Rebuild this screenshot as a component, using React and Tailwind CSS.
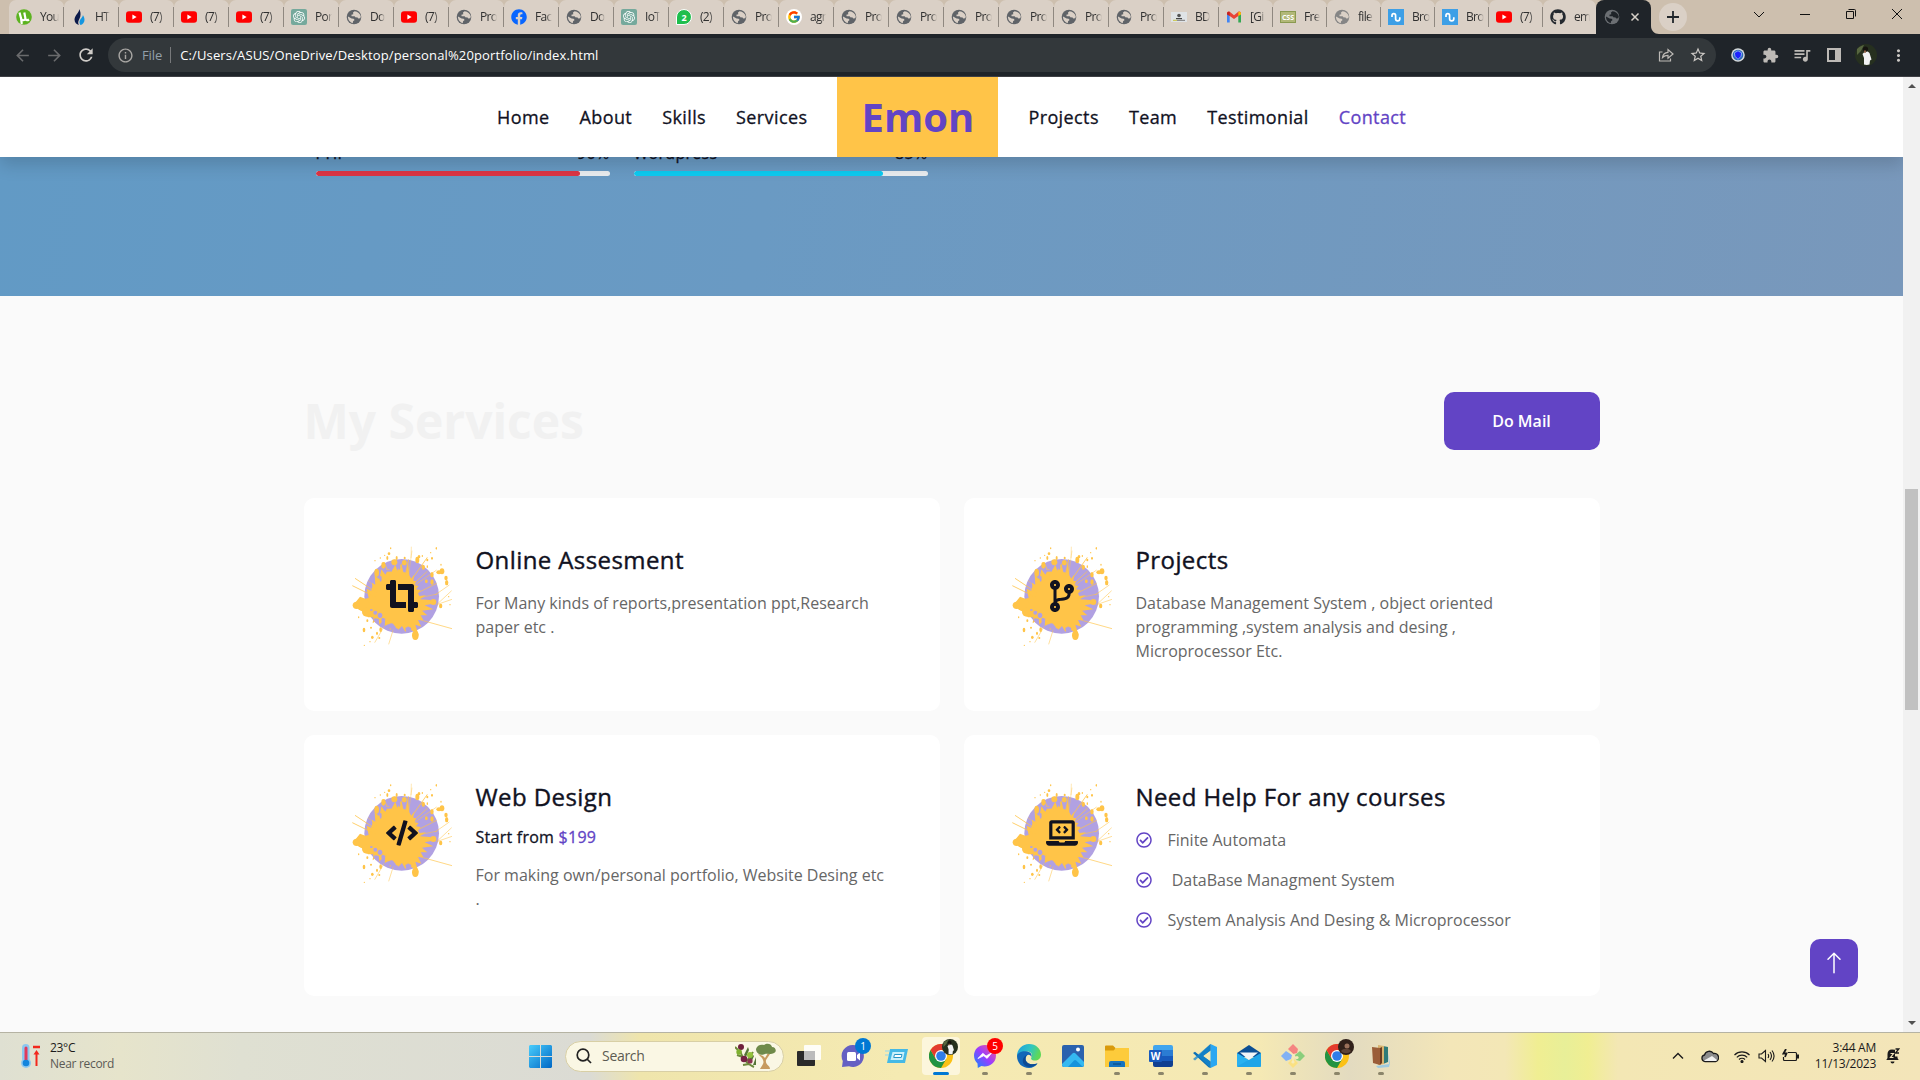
import React from "react";
import { FaCropAlt, FaCodeBranch, FaCode, FaLaptopCode, FaRegCheckCircle, FaGithub, FaFacebook } from "react-icons/fa";
import { BsArrowUp } from "react-icons/bs";
import { SiOpenai } from "react-icons/si";
import { FcGoogle } from "react-icons/fc";
import { MdInfoOutline, MdStarBorder, MdQueueMusic, MdMoreVert, MdRefresh, MdArrowBack, MdArrowForward, MdExtension } from "react-icons/md";

/* ---------- favicons ---------- */

const Globe = ({ land = "#dad0c6", sea = "#5f6368" }) => (
  <svg viewBox="0 0 16 16" className="size-4">
    <circle cx="8" cy="8" r="7.300" fill={sea} />
    <path d="M8.600 2.200 7 3.600l.3 1.600-1.900.6.2 1.400h3l1.200 1.300 1.400-.3 1.100 1.300 2-.3.5-1.600C14.200 4.500 11.800 2.500 8.600 2.200z" fill={land} />
    <path d="M2 7.600 5.600 9.400l2 .3 1 1.300-1.500 1.300-.4 2C4 13.400 1.800 11 2 7.600z" fill={land} />
  </svg>
);

const YouTube = () => (
  <svg viewBox="0 0 16 16" className="size-4">
    <rect y="2.300" width="16" height="11.400" rx="3" fill="#f00" />
    <path d="M6.400 5.600v4.800L10.600 8z" fill="#fff" />
  </svg>
);

const OpenAi = () => (
  <span className="grid size-4 place-items-center rounded-[2px] bg-[#75a99c] text-white">
    <SiOpenai size={12} />
  </span>
);

const UTorrent = () => (
  <svg viewBox="0 0 16 16" className="size-4">
    <circle cx="8" cy="8" r="7.800" fill="#5cb320" />
    <path d="M3.500 3.500l1.600 6c.6 2.300 3.600 2.200 4.400.3L8.300 3.500M9.500 10c.5 1.600 2.300 1.400 3.500.5M5 9l.8 6" stroke="#fff" strokeWidth="2.200" fill="none" />
  </svg>
);

const Flame = () => (
  <svg viewBox="0 0 16 16" className="size-4">
    <path d="M8 0c1 3-4.500 6-4.500 10.500C3.500 13.500 5.500 15.500 8 16c-2-3 .5-5.500 1.300-8.500C9.900 4.500 9.500 2 8 0z" fill="#0b1a4a" />
    <path d="M11.800 6c.5 2-3.300 4-3.300 7 0 1.500.5 2.300 1 3 2-.4 4-2.300 4-5 0-2-.7-3.700-1.700-5z" fill="#1496e0" />
  </svg>
);

const Chat2 = () => (
  <span className="grid size-4 place-items-center rounded-full rounded-bl-none border border-white bg-[#1fbe4d] text-[9px] leading-none font-bold text-white">2</span>
);

const Bd = () => (
  <svg viewBox="0 0 16 16" className="size-4">
    <rect y="3" width="16" height="10" fill="#dfe3e6" />
    <circle cx="8" cy="6.500" r="1.800" fill="#555" />
    <path d="M5 9h6v1.200H5z" fill="#444" />
    <path d="M2 10.800h4v1H2z" fill="#c8c33b" />
    <path d="M6 10.800h8v1H6z" fill="#777" />
  </svg>
);

const Gmail = () => (
  <svg viewBox="0 0 16 16" className="size-4">
    <path d="M1 13.500V4l2.700 2v7.500z" fill="#4285f4" />
    <path d="M15 13.500V4l-2.700 2v7.500z" fill="#34a853" />
    <path d="M1 4.500C1 2.600 2.800 2.200 4 3l4 3.200L12 3c1.200-.8 3-.4 3 1.500L12.300 7 8 10 3.700 7z" fill="#ea4335" />
    <path d="M12.300 3C13.500 2.200 15 3 15 4.500V5.500L12.300 7z" fill="#fbbc04" />
    <path d="M1 4.500C1 3 2.500 2.200 3.700 3v4L1 5.500z" fill="#c5221f" />
  </svg>
);

const Css = () => (
  <span className="grid h-[12px] w-4 place-items-center border border-[#8a9a50] bg-[#b2b878] text-[7px] leading-none font-bold text-white">CSS</span>
);

const Wave = () => (
  <svg viewBox="0 0 16 16" className="size-4">
    <rect width="16" height="16" fill="#3d9fe6" />
    <path d="M4 8V6.500a1.800 1.800 0 0 1 3.600 0v3.200a2.100 2.100 0 0 0 4.200 0V8.300" stroke="#fff" strokeWidth="1.700" fill="none" />
  </svg>
);

const pro = { icon: <Globe />, t: "Pro" };
const tube = { icon: <YouTube />, t: "(7)" };
const TABS = [
  { icon: <UTorrent />, t: "You" },
  { icon: <Flame />, t: "HT" },
  tube, tube, tube,
  { icon: <OpenAi />, t: "Por" },
  { icon: <Globe />, t: "Do" },
  tube, pro,
  { icon: <FaFacebook size={16} color="#0866ff" />, t: "Fac" },
  { icon: <Globe />, t: "Do" },
  { icon: <OpenAi />, t: "IoT" },
  { icon: <Chat2 />, t: "(2)" },
  pro,
  { icon: <span className="rounded-full bg-white p-px"><FcGoogle size={14} /></span>, t: "agr" },
  pro, pro, pro, pro, pro, pro,
  { icon: <Bd />, t: "BD" },
  { icon: <Gmail />, t: "[Gi", w: "w-[54px]" },
  { icon: <Css />, t: "Fre", w: "w-[54px]" },
  { icon: <Globe sea="#858585" />, t: "file", w: "w-[54px]" },
  { icon: <Wave />, t: "Bro", w: "w-[54px]" },
  { icon: <Wave />, t: "Bro", w: "w-[54px]" },
  { ...tube, w: "w-[54px]" },
  { icon: <FaGithub size={16} color="#24292f" />, t: "em", w: "w-[53px]", last: true },
];

function TabStrip() {
  return (
    <div className="flex h-[34px] bg-[#cdbfae] pl-[9px]">
      {TABS.map((tab, i) => (
        <div
          key={i}
          className={`flex shrink-0 items-center rounded-t-[7px] bg-[#dad0c6] pl-[7px] ${tab.w || "w-[55px]"}`}
        >
          <span className="grid size-4 shrink-0 place-items-center">{tab.icon}</span>
          <span className="ml-[8px] min-w-[15px] mask-r-from-65% text-[12px] tracking-[-0.7px] whitespace-nowrap text-[#303030]">
            {tab.t}
          </span>
          {!tab.last && <span className="ml-auto h-5 w-px bg-[#8f8880]" />}
        </div>
      ))}
      <div className="flex w-[55px] shrink-0 items-center rounded-t-[8px] bg-[#1f2429] pl-2">
        <Globe land="#1f2429" sea="#6b6f73" />
        <svg viewBox="0 0 10 10" className="ml-[10px] size-[10px]">
          <path d="M1.500 1.500l7 7M8.500 1.500l-7 7" stroke="#d6d0c8" strokeWidth="1.500" />
        </svg>
      </div>
      <svg viewBox="0 0 8 8" className="size-2 self-end">
        <path d="M0 0v8h8C3.500 8 0 4.500 0 0z" fill="#1f2429" />
      </svg>
      <div className="mt-[3px] grid size-7 place-items-center rounded-full bg-[#dad0c6]">
        <svg viewBox="0 0 12 12" className="size-3">
          <path d="M6 0v12M0 6h12" stroke="#20252a" strokeWidth="1.800" />
        </svg>
      </div>
      <div className="ml-auto flex h-[28px] text-[#111]">
        {[
          "M1 4l5 5 5-5",
          "M1 6.500h10",
          "M1.500 3.500h7v7h-7zM3.500 1.500h6a1 1 0 0 1 1 1v6",
          "M1 1l10 10M11 1L1 11",
        ].map((d) => (
          <div key={d} className="grid w-[46px] place-items-center">
            <svg viewBox="0 0 12 12" className="size-3" fill="none" stroke="currentColor">
              <path d={d} />
            </svg>
          </div>
        ))}
      </div>
    </div>
  );
}

const Cell = ({ children }) => <div className="grid w-8 place-items-center">{children}</div>;

const Portrait = ({ className }) => (
  <svg viewBox="0 0 22 22" className={className}>
    <circle cx="11" cy="11" r="11" fill="#26301f" />
    <path d="M2 5c3-3 6-4 7-4l-3 6-4 4z" fill="#56653f" />
    <path d="M9.500 8c2-1 4-.8 5 1l2 6.500-1.500 1-.5 4c-2 .7-4 .5-5.500 0L9 14 7.500 10z" fill="#f1f2f4" />
    <circle cx="10.500" cy="5" r="2.600" fill="#15130f" />
    <path d="M9 6.500h2v2.200H9z" fill="#8d6247" />
  </svg>
);

function Toolbar() {
  return (
    <div className="flex h-[43px] items-center border-b border-[#3f4045] bg-[#1f2429] pr-[6px] pl-[6px]">
      <Cell><MdArrowBack size={19} color="#6a6b6d" /></Cell>
      <Cell><MdArrowForward size={19} color="#6a6b6d" /></Cell>
      <Cell><MdRefresh size={20} color="#cfccc8" /></Cell>
      <div className="mx-[6px] flex h-[34px] flex-1 items-center rounded-full bg-[#33383b] pl-[9px]">
        <MdInfoOutline size={17} color="#a9a7a4" />
        <span className="ml-2 pt-px text-[13px] tracking-[-0.1px] text-[#93a0ab]">File</span>
        <span className="mr-[9px] ml-[8px] h-4 w-px bg-[#77797b]" />
        <span className="pt-[2px] text-[13px] tracking-[0.14px] text-white">C:/Users/ASUS/OneDrive/Desktop/personal%20portfolio/index.html</span>
        <svg viewBox="0 0 16 16" className="mr-[15px] ml-auto size-4" fill="none" stroke="#bdbab6" strokeWidth="1.200">
          <path d="M4.500 5H1.500v9h11v-2.500" />
          <path d="M4.500 10.500c.5-3.500 2.500-5 5.500-5.200V2.500L15 7l-5 4.200V8.400c-2.500 0-4 .6-5.500 2.100z" />
        </svg>
        <MdStarBorder size={18} color="#cbc8c4" className="mr-[9px]" />
      </div>
      <Cell>
        <svg viewBox="0 0 14 14" className="size-[14px]">
          <circle cx="7" cy="7" r="6.800" fill="#d5d9da" />
          <circle cx="7" cy="7" r="5.300" fill="#2b68b8" />
          <path d="M7 2.800l3.600 2-.5 3.400L7 11.400 3.900 8.200l-.5-3.400z" fill="#1c21ff" stroke="#9ec3ee" strokeWidth=".8" />
        </svg>
      </Cell>
      <Cell><MdExtension size={17} color="#bdbab6" /></Cell>
      <Cell><MdQueueMusic size={20} color="#bdbab6" /></Cell>
      <Cell>
        <svg viewBox="0 0 14 14" className="size-[14px]">
          <path d="M0 0h14v14H0zM2 2v10h6V2z" fillRule="evenodd" fill="#bdbab6" />
        </svg>
      </Cell>
      <Cell><Portrait className="size-[22px]" /></Cell>
      <Cell><MdMoreVert size={19} color="#cbc8c4" /></Cell>
    </div>
  );
}

/* ---------- page ---------- */

const NavLink = ({ children, active }) => (
  <a className={`px-[15px] text-[18px] tracking-[0.022em] [-webkit-text-stroke:0.3px_currentColor] ${active ? "text-[#6244c5]" : "text-[#11121f]"}`}>{children}</a>
);

function NavBar() {
  return (
    <nav className="relative z-10 flex h-20 items-center bg-white pl-[482px] whitespace-nowrap shadow-[0_8px_16px_rgba(0,0,0,0.15)]">
      <NavLink>Home</NavLink>
      <NavLink>About</NavLink>
      <NavLink>Skills</NavLink>
      <NavLink>Services</NavLink>
      <div className="mx-[15px] grid h-20 w-[161px] shrink-0 place-items-center bg-[#ffc448] text-[40px] font-bold text-[#6244c5]">Emon</div>
      <NavLink>Projects</NavLink>
      <NavLink>Team</NavLink>
      <NavLink>Testimonial</NavLink>
      <NavLink active>Contact</NavLink>
    </nav>
  );
}

const Skill = ({ name, value, color }) => (
  <div className="w-[294px]">
    <div className="flex h-6 justify-between text-[16px] leading-6 tracking-[0.018em] text-[#11121f] [-webkit-text-stroke:0.3px_currentColor]">
      <span>{name}</span>
      <span>{value}%</span>
    </div>
    <div className="mt-[6px] h-[5px] overflow-hidden rounded-full bg-[#e9ecef]">
      <div className={`h-full rounded-full ${color}`} style={{ width: `${value}%` }} />
    </div>
  </div>
);

const RAYS = [
  [45, 145, 110, 188, 3], [37, 167, 108, 202, 3], [235, 268, 336, 296, 2.5], [214, 50, 213, 84, 1.5],
  [292, 222, 335, 182, 2], [290, 224, 336, 208, 2], [160, 298, 146, 343, 2], [214, 150, 262, 82, 3],
  [285, 195, 328, 165, 2], [132, 290, 104, 338, 2], [225, 165, 290, 120, 2], [230, 190, 290, 160, 2.5],
  [205, 140, 216, 62, 1.500], [230, 205, 292, 192, 2], [195, 140, 206, 88, 3], [222, 160, 262, 124, 2.5],
  [110, 175, 84, 152, 2], [150, 140, 132, 96, 3],
];
const DROPS = [
  [297, 127, 8, 6], [306, 124, 7, 9], [318, 144, 5, 7], [320, 158, 5, 8], [232, 90, 6, 10], [237, 80, 4, 5], [262, 90, 3, 4],
  [276, 85, 3, 4], [247, 78, 2, 3], [289, 55, 2, 4], [272, 68, 2, 2], [152, 55, 2, 3], [147, 71, 4, 4], [142, 84, 3, 6], [134, 76, 2, 2],
  [170, 84, 3, 6], [194, 84, 3, 4], [226, 316, 10, 14], [72, 300, 4, 7], [97, 322, 4, 5], [111, 310, 3, 5], [122, 299, 4, 7],
  [73, 346, 2, 2], [118, 324, 3, 3], [82, 272, 3, 4], [93, 293, 3, 3], [280, 216, 9, 9], [302, 228, 5, 7], [130, 106, 6, 10],
  [163, 97, 9, 9], [193, 98, 7, 8], [110, 128, 7, 12], [259, 154, 4, 6], [276, 134, 5, 8], [276, 156, 5, 8], [50, 226, 12, 11],
  [70, 226, 20, 18], [80, 246, 14, 14], [250, 112, 5, 8], [326, 200, 2, 2], [330, 224, 2, 2], [303, 104, 2, 3], [262, 110, 2, 4],
  [56, 262, 2, 3], [90, 335, 2, 2], [105, 92, 2, 2], [121, 84, 2, 2],
];
const HOLES = [
  [120, 256, 7, 8], [106, 248, 6, 6], [129, 270, 5, 7], [108, 270, 8, 5], [154, 288, 8, 8], [168, 300, 8, 5], [140, 294, 5, 4],
  [94, 240, 4, 3], [122, 146, 3, 9], [146, 122, 8, 3], [178, 112, 3, 8], [94, 168, 3, 8], [205, 296, 9, 5],
];

const Splash = () => (
  <svg viewBox="36 48 300 300" className="col-start-1 row-start-1 size-[100px]">
    <circle cx="185" cy="199" r="112" fill="#b1a1e2" />
    <g fill="#ffc448" stroke="#ffc448">
      <path
        strokeWidth="0"
        d="M40 225 60 200 76 206 86 204 80 176 94 182 96 158 106 164 104 136 118 148 124 118 136 134 146 116 154 126 166 104 172 122 184 100 190 126 198 128 204 96 208 136 214 146 222 134 220 152 228 154 224 166 236 168 228 178 242 180 234 190 238 198 258 196 240 208 270 210 286 220 254 226 280 238 246 242 262 256 242 256 250 270 234 270 244 290 226 284 236 316 214 300 204 288 196 306 186 288 172 302 164 286 150 300 146 282 134 288 136 264 118 284 116 266 98 280 100 262 84 262 62 240z"
      />
      {RAYS.map(([x1, y1, x2, y2, w], i) => (
        <line key={i} x1={x1} y1={y1} x2={x2} y2={y2} strokeWidth={w} opacity=".8" />
      ))}
      {DROPS.map(([x, y, rx, ry], i) => (
        <ellipse key={i} cx={x} cy={y} rx={rx} ry={ry} strokeWidth="0" />
      ))}
    </g>
    {HOLES.map(([x, y, rx, ry], i) => (
      <ellipse key={i} cx={x} cy={y} rx={rx} ry={ry} fill="#b1a1e2" />
    ))}
  </svg>
);

const Card = ({ icon, title, children }) => (
  <article className="flex rounded-[10px] bg-white p-12">
    <div className="grid size-[100px] shrink-0 place-items-center text-[32px] text-[#11121f]">
      <Splash />
      <span className="z-1 col-start-1 row-start-1">{icon}</span>
    </div>
    <div className="ml-6 flex-1">
      <h3 className="pb-[2px] text-[24px] leading-[27px] tracking-[0.017em] text-[#11121f] [-webkit-text-stroke:0.4px_currentColor]">{title}</h3>
      {children}
    </div>
  </article>
);

const Text = ({ className, children }) => <p className={`text-[16px] leading-6 text-[#666] ${className}`}>{children}</p>;

function Services() {
  return (
    <section className="h-[736px] bg-[#fafafa] pt-24 pl-[303.5px]">
      <div className="flex h-[58px] w-[1296px] items-center justify-between">
        <h2 className="text-[48px] leading-[58px] font-bold text-[#f1f1f1]">My Services</h2>
        <button className="h-[58px] w-[156px] rounded-[10px] bg-[#6244c5] text-[16px] font-semibold text-white">Do Mail</button>
      </div>
      <div className="mt-12 grid w-[1296px] grid-cols-2 grid-rows-[213px_261px] gap-6">
        <Card icon={<FaCropAlt />} title="Online Assesment">
          <Text className="mt-4">For Many kinds of reports,presentation ppt,Research<br />paper etc .</Text>
        </Card>
        <Card icon={<FaCodeBranch />} title="Projects">
          <Text className="mt-4">Database Management System , object oriented<br />programming ,system analysis and desing ,<br />Microprocessor Etc.</Text>
        </Card>
        <Card icon={<FaCode />} title="Web Design">
          <p className="mt-[13px] text-[16px] leading-6 tracking-[0.016em] text-[#11121f] [-webkit-text-stroke:0.3px_currentColor]">
            Start from <span className="text-[#6244c5]">$199</span>
          </p>
          <Text className="mt-[14px]">For making own/personal portfolio, Website Desing etc<br />.</Text>
        </Card>
        <Card icon={<FaLaptopCode />} title="Need Help For any courses">
          <ul className="mt-4 flex flex-col gap-4 text-[16px] leading-6 text-[#666]">
            {["Finite Automata", "\u00a0DataBase Managment System", "System Analysis And Desing & Microprocessor"].map((s) => (
              <li key={s} className="flex items-center gap-4 whitespace-nowrap">
                <FaRegCheckCircle size={16} color="#6244c5" />
                {s}
              </li>
            ))}
          </ul>
        </Card>
      </div>
    </section>
  );
}

function Page() {
  return (
    <div className="flex h-[955px]">
      <main className="relative w-[1903px] shrink-0 overflow-hidden">
        <NavBar />
        <section className="flow-root h-[139px] bg-[linear-gradient(100deg,#629ac5_0%,#6a9ac3_40%,#7998bb_100%)] pl-[315.5px]">
          <div className="-mt-4 flex gap-6">
            <Skill name="PHP" value={90} color="bg-[#dc3545]" />
            <Skill name="Wordpress" value={85} color="bg-[#0dcaf0]" />
          </div>
        </section>
        <Services />
        <button className="absolute right-[45px] bottom-[45px] grid size-12 place-items-center rounded-[10px] bg-[#6244c5] text-white">
          <BsArrowUp size={24} />
        </button>
      </main>
      <div className="flex flex-1 flex-col items-center bg-[#f1f1f1]">
        <span className="mt-[7px] border-x-4 border-b-4 border-x-transparent border-b-[#505050]" />
        <span className="mt-[401px] h-[221px] w-[13px] bg-[#c1c1c1]" />
        <span className="mt-auto mb-[7px] border-x-4 border-t-4 border-x-transparent border-t-[#505050]" />
      </div>
    </div>
  );
}

/* ---------- taskbar ---------- */

const Chrome = () => (
  <svg viewBox="0 0 24 24" className="size-6">
    <circle cx="12" cy="12" r="12" fill="#fbc116" />
    <path d="M1.600 6A12 12 0 0 0 12 24l5.200-9L12 12 6.800 15z" fill="#229342" />
    <path d="M1.600 6A12 12 0 0 1 22.400 6H12L6.800 15z" fill="#e33b2e" />
    <circle cx="12" cy="12" r="6" fill="#fff" />
    <circle cx="12" cy="12" r="4.800" fill="#2f7de9" />
  </svg>
);

const TaskView = () => (
  <svg viewBox="0 0 24 24" className="size-6">
    <rect y="7" width="18" height="15" rx="1" fill="#2a2a2a" />
    <rect x="7" y="1" width="17" height="15" rx="1" fill="#fff" opacity=".9" />
    <rect x="7" y="7" width="11" height="9" fill="#bcbcbc" />
  </svg>
);
const Teams = () => (
  <svg viewBox="0 0 24 24" className="size-6">
    <path d="M12 1a11 11 0 1 1-4 21.300L1 23l.8-6A11 11 0 0 1 12 1z" fill="#6560c3" />
    <rect x="6" y="8" width="9" height="9" rx="1.500" fill="#fff" />
    <path d="M16 11l3-2.500v8L16 14z" fill="#fff" />
  </svg>
);
const Run = () => (
  <svg viewBox="0 0 24 24" className="size-6">
    <path d="M5 5h18l-3 14H2z" fill="#45b9e6" />
    <path d="M7.500 8h12l-1.700 8H5.500z" fill="#c9f0fb" />
    <path d="M9.500 10.500h7.500l-.8 3H8.700z" fill="#fff" stroke="#2796c8" strokeWidth="1" />
    <path d="M0 7h5M0 11h4" stroke="#8ed7f0" />
  </svg>
);
const Messenger = () => (
  <svg viewBox="0 0 24 24" className="size-6">
    <linearGradient id="msg" x1="0" y1="1" x2="1" y2="0">
      <stop offset="0" stopColor="#0a8cff" /><stop offset=".5" stopColor="#9a3cff" /><stop offset="1" stopColor="#ff5f80" />
    </linearGradient>
    <path d="M12 1C5.500 1 1 5.600 1 11.600c0 3.200 1.300 5.900 3.500 7.800L4.800 24l3.600-2c6.400 1.800 14.600-2 14.600-10.400C23 5.600 18.500 1 12 1z" fill="url(#msg)" />
    <path d="M5 14.500l4.800-5.200 3.300 2.700 5.700-3.200-4.700 5.600-3.300-2.700z" fill="#fff" stroke="#fff" strokeWidth=".8" />
  </svg>
);
const Edge = () => (
  <svg viewBox="0 0 24 24" className="size-6">
    <linearGradient id="edg" x1="0" y1="0" x2="1" y2=".3">
      <stop offset="0" stopColor="#1b9de2" /><stop offset=".6" stopColor="#31c6c0" /><stop offset="1" stopColor="#5fd857" />
    </linearGradient>
    <path d="M0 12C0 5 5.500 0 12 0c7 0 12 5 12 10.500 0 4-3 6-6 6-3.500 0-4.500-1.500-3.600-3C16 10 14 7.500 10 7.500 5 7.500 2 11 0 12z" fill="url(#edg)" />
    <path d="M0 12C.5 9 4.500 7 9 7.300c4.500.2 6.300 3.400 5.400 5.700C13 9.500 9.500 10.500 8.700 13.500 7.500 18.500 13 22 20.500 19.500 18.500 22.300 15.500 24 12 24 5 24 0 19 0 12z" fill="#1167b8" />
    <path d="M8.700 13.500C7.500 18.500 13 22 20.500 19.500c-4 4-10 4.500-13 1.500C4.500 17.500 5.500 13 10 11z" fill="#0c4a93" />
  </svg>
);
const Photos = () => (
  <svg viewBox="0 0 24 24" className="size-6">
    <rect x="1" y="1" width="22" height="22" rx="2" fill="#2b62ae" />
    <path d="M1 20 11.500 9.500c1-1 2-1 3 0L23 18v3a2 2 0 0 1-2 2H3a2 2 0 0 1-2-2z" fill="#35b9f1" />
    <path d="M7 23l6-6.500c.7-.7 1.500-.7 2.200 0L22 23z" fill="#1593dc" />
    <circle cx="17" cy="5.500" r="2" fill="#fff" />
  </svg>
);
const Folder = () => (
  <svg viewBox="0 0 24 24" className="size-6">
    <path d="M0 2.500A1 1 0 0 1 1 1.500h7l2.500 2.500V8H0z" fill="#d99a0b" />
    <path d="M0 6.500h8.500L11 4h13v19H0z" fill="#fdcb3b" />
    <path d="M4 23v-4a2 2 0 0 1 2-2h12a2 2 0 0 1 2 2v4z" fill="#1574c0" />
    <path d="M8 20h8" stroke="#0b538f" strokeWidth="1.500" />
  </svg>
);
const Word = () => (
  <span className="grid size-6 grid-cols-[4px_9px_11px] grid-rows-[1px_5px_12px_5px_1px]">
    <span className="col-span-2 col-start-2 row-span-3 row-start-2 rounded-[2px] bg-[linear-gradient(#41a5ee_25%,#2b7cd3_25%_50%,#185abd_50%_75%,#103f91_75%)]" />
    <span className="col-span-2 col-start-1 row-start-3 grid place-items-center rounded-[1px] bg-[#185abd] text-[10px] leading-none font-bold text-white">W</span>
  </span>
);
const VsCode = () => (
  <svg viewBox="0 0 24 24" className="size-6">
    <path d="M17.500 0 24 3v18l-6.500 3z" fill="#2aa7f2" />
    <path d="M17.500 6.500V0L6 11 2 7.700 0 9l15.500 14.200 2 .8v-6.500L10 12z" fill="#0d70b5" />
    <path d="M17.500 24v-6.500L10 12l7.500-5.500V0L0 15l2 1.500L6 13z" fill="#1685cd" opacity=".75" />
  </svg>
);
const Mail = () => (
  <svg viewBox="0 0 24 24" className="size-6">
    <path d="M0 9 12 1l12 8v4H0z" fill="#0c4f94" />
    <path d="M0 9l12 7 12-7v13a1 1 0 0 1-1 1H1a1 1 0 0 1-1-1z" fill="#29b1f0" />
    <path d="M3 8.500h18L12 16z" fill="#f2f5f8" />
    <path d="M0 22.500 15 14l9-5v13a1 1 0 0 1-1 1H1z" fill="#128fd9" opacity=".35" />
  </svg>
);
const Git = () => (
  <svg viewBox="0 0 24 24" className="size-6">
    <path d="M7 5l5-5 5 5-1 4-4 1z" fill="#f58581" />
    <path d="M0 12l5-5 6 4-1 4-5 2z" fill="#82b2f5" />
    <path d="M24 12l-5-5-5 4 1 5 4 1z" fill="#8ace7c" />
    <path d="M7 19l5-5 5 5-5 5z" fill="#fbe182" />
    <path d="M9 8l7 7M12 10v7" stroke="#f6ebbb" strokeWidth="1.500" />
    <circle cx="12" cy="18" r="1.600" fill="#f6ebbb" />
    <circle cx="16" cy="13.500" r="1.600" fill="#f6ebbb" />
  </svg>
);
const Books = () => (
  <svg viewBox="0 0 24 24" className="size-6">
    <path d="M7 22l13-2-2-15 3 14-1 4-11 1z" fill="#9fcbe0" />
    <path d="M14 2l5 1v15l-5 2z" fill="#2f7b78" />
    <path d="M9 1l6 1v18l-6 1z" fill="#d8b370" />
    <path d="M3 3l8 1v17l-7-2z" fill="#9a5d38" />
    <path d="M11 4l2-1v16l-2 2z" fill="#6c3d22" />
  </svg>
);

const Badge = ({ color, children }) => (
  <span className={`absolute -top-[6px] -right-[6px] grid size-4 place-items-center rounded-full text-[10px] leading-none text-white ${color}`}>{children}</span>
);

const APPS = [
  { icon: <TaskView /> },
  { icon: <Teams />, badge: <Badge color="bg-[#0078d4]">1</Badge> },
  { icon: <Run /> },
  { icon: <Chrome />, active: true, badge: <Portrait className="absolute -top-[5px] -right-[5px] size-4" /> },
  { icon: <Messenger />, run: true, badge: <Badge color="bg-[#f00]">5</Badge> },
  { icon: <Edge />, run: true },
  { icon: <Photos /> },
  { icon: <Folder />, run: true },
  { icon: <Word />, run: true },
  { icon: <VsCode />, run: true },
  { icon: <Mail />, run: true },
  { icon: <Git />, run: true },
  {
    icon: <Chrome />, run: true,
    badge: (
      <svg viewBox="0 0 16 16" className="absolute -top-[5px] -right-[5px] size-4">
        <circle cx="8" cy="8" r="8" fill="#30201a" />
        <circle cx="9" cy="7" r="2.500" fill="#9a705b" />
        <path d="M3 12c2-3 8-3 10 0-2 3-8 3-10 0z" fill="#5d4336" />
      </svg>
    ),
  },
  { icon: <Books />, run: true },
];

function Taskbar() {
  return (
    <footer className="flex h-12 items-center border-t border-[#b5b3a3] bg-[linear-gradient(90deg,#dfe0d2_0px,#e6e4cb_120px,#dfe0d2_240px,#dbdbd4_590px,#efe5ac_640px,#f5eab2_900px,#f5e9b4_1260px,#e3dbc0_1350px,#f3e6b8_1450px,#f3e7b6_1505px,#f0ee92_1538px,#e8ef98_1565px,#f0ee92_1588px,#f3e7b4_1618px,#f3e5b9_1920px)] pb-px text-[#1b1b1b]">
      <svg viewBox="0 0 20 28" className="ml-[21px] h-7 w-5">
        <rect x="1" y="2" width="7.500" height="18" rx="3.700" fill="#8cc7f0" />
        <circle cx="5" cy="21" r="5" fill="#8cc7f0" />
        <path d="M5 6v12" stroke="#e1395b" strokeWidth="3" strokeLinecap="round" />
        <circle cx="5" cy="21" r="3.300" fill="#1385dd" />
        <path d="M12 5h7" stroke="#f3281d" strokeWidth="2.500" />
        <path d="M15.500 8l3 4.500h-2V24h-2V12.500h-2z" fill="#f3281d" />
      </svg>
      <div className="ml-[9px] w-[100px] text-[12px] leading-4 tracking-[-0.3px]">
        <div>23°C</div>
        <div className="text-[#5a5a55]">Near record</div>
      </div>
      <svg viewBox="0 0 23 23" className="ml-[379px] size-[23px]">
        <linearGradient id="win" x1="0" y1="0" x2="1" y2="1">
          <stop offset="0" stopColor="#49cdfc" /><stop offset="1" stopColor="#0067c5" />
        </linearGradient>
        <path d="M1 0h10v11H0V1zM12 0h10l1 1v10H12zM0 12h11v11H1l-1-1zM12 12h11v10l-1 1H12z" fill="url(#win)" />
      </svg>
      <div className="ml-[13px] flex h-[31px] w-[219px] items-center rounded-full border border-[#d8cfa5] bg-[#faf7e4] pl-[10px]">
        <svg viewBox="0 0 16 16" className="size-4" fill="none" stroke="#222" strokeWidth="1.700">
          <circle cx="7" cy="7" r="5.800" />
          <path d="M11 11l4 4" />
        </svg>
        <span className="ml-[10px] pb-px text-[14px] tracking-[-0.3px] text-[#5c5b52]">Search</span>
        <svg viewBox="0 0 42 26" className="mr-[6px] ml-auto h-[26px] w-[42px]">
          <path d="M5 4c0 8 5 16 14 20M8 14l-6-2M12 18l6-9M3 7L0 4M14 21l-6 1" stroke="#6d8a3c" strokeWidth="2" fill="none" />
          <path d="M14 17l3-6 2 2-3 7zM9 12l4-8 1 3-3 7zM18 22l3-8v8z" fill="#567537" />
          <circle cx="6" cy="4" r="3" fill="#6f1f3c" />
          <circle cx="4" cy="9" r="2.700" fill="#7fb12f" />
          <circle cx="15" cy="12" r="3" fill="#94c23c" />
          <circle cx="9" cy="16" r="3.300" fill="#742142" />
          <circle cx="15" cy="18" r="2.600" fill="#8a3350" />
          <path d="M25 26c3-5 5-6 2-11l-4-4 5 2 2 2 3-5 2 1-4 6c-1 5 4 5 4 9z" fill="#c79a5d" />
          <path d="M21 6c1-4 5-5 8-4 4-3 8 0 8 2 4 0 5 5 2 6-4 2-7 0-9 1-3 2-9 0-9-5z" fill="#6f8a4a" />
        </svg>
      </div>
      <div className="ml-[3px] flex">
        {APPS.map((app, i) => (
          <div key={i} className="flex h-[46px] w-11 flex-col items-center">
            <div className={`mt-[4px] flex h-[38px] w-[38px] flex-col items-center rounded-[4px] ${app.active ? "bg-[#fcf6dc]" : ""}`}>
              <div className="relative mt-[7px]">
                {app.icon}
                {app.badge}
              </div>
              {app.active && <span className="mt-1 h-[3px] w-4 rounded-full bg-[#0078d4]" />}
              {app.run && <span className="mt-1 h-[3px] w-[6px] rounded-full bg-[#8b856a]" />}
            </div>
          </div>
        ))}
      </div>
      <svg viewBox="0 0 12 8" className="ml-auto h-2 w-3" fill="none" stroke="#1b1b1b" strokeWidth="1.400"><path d="M1 6.500l5-5 5 5" /></svg>
      <svg viewBox="0 0 18 14" className="ml-[17px] h-[14px] w-[18px]">
        <path d="M4 12.500a3.300 3.300 0 0 1-.5-6.500A5 5 0 0 1 12.500 4.500 4 4 0 0 1 14.500 12.500z" fill="#8c8c8c" stroke="#1b1b1b" strokeWidth="1.300" />
        <path d="M3 11.500 11 7l5 4c-.5 1-1 1-2 1H4z" fill="#f1f1f1" />
      </svg>
      <svg viewBox="0 0 16 13" className="ml-[15px] h-[13px] w-4" fill="none" stroke="#1b1b1b" strokeWidth="1.200">
        <path d="M.5 5a10.500 10.500 0 0 1 15 0M2.800 7.300a7.300 7.300 0 0 1 10.400 0M5 9.500a4.200 4.200 0 0 1 6 0" />
        <circle cx="8" cy="11.500" r="1" fill="#1b1b1b" />
      </svg>
      <svg viewBox="0 0 17 14" className="ml-2 h-[14px] w-[17px]" fill="none" stroke="#1b1b1b" strokeWidth="1.100">
        <path d="M1 5h2.500l4-3.500v11L3.500 9H1zM10 5c.8 1.200.8 2.800 0 4M12 3c1.700 2.300 1.700 5.700 0 8M14 1.500c2.500 3.300 2.500 7.700 0 11" />
      </svg>
      <svg viewBox="0 0 17 14" className="ml-[7px] h-[14px] w-[17px]" fill="none" stroke="#1b1b1b" strokeWidth="1.200">
        <path d="M6 3.500h7.500a1 1 0 0 1 1 1v6a1 1 0 0 1-1 1h-11a1 1 0 0 1-1-1V8" />
        <path d="M15 6h1.500v3H15z" fill="#1b1b1b" />
        <path d="M4 0 1.500 4.500h3L3 8" strokeWidth="1.800" />
      </svg>
      <div className="ml-[13px] w-[64px] text-right text-[12px] leading-4 tracking-[-0.25px] whitespace-nowrap">
        <div>3:44 AM</div>
        <div>11/13/2023</div>
      </div>
      <svg viewBox="0 0 14 16" className="mr-[20px] ml-[10px] h-4 w-[14px]">
        <path d="M6 1.500c-3 0-4.500 2-4.500 4.500v4L.3 12h12.400l-1.200-2V8.500H9V1.800z" fill="#1b1b1b" />
        <path d="M4.500 13.500h4a2 2 0 0 1-4 0z" fill="#1b1b1b" />
        <path d="M9.500 1h3.300l-3.300 4h3.500" stroke="#1b1b1b" strokeWidth="1.300" fill="none" />
        <path d="M4.500 5.500h3l-3 4h3" stroke="#f3e5b9" strokeWidth="1.200" fill="none" />
      </svg>
    </footer>
  );
}

export default function App() {
  return (
    <div className="h-[1080px] w-[1920px] overflow-hidden bg-[#fafafa] font-['Open_Sans','Noto_Sans',sans-serif]">
      <TabStrip />
      <Toolbar />
      <Page />
      <Taskbar />
    </div>
  );
}
